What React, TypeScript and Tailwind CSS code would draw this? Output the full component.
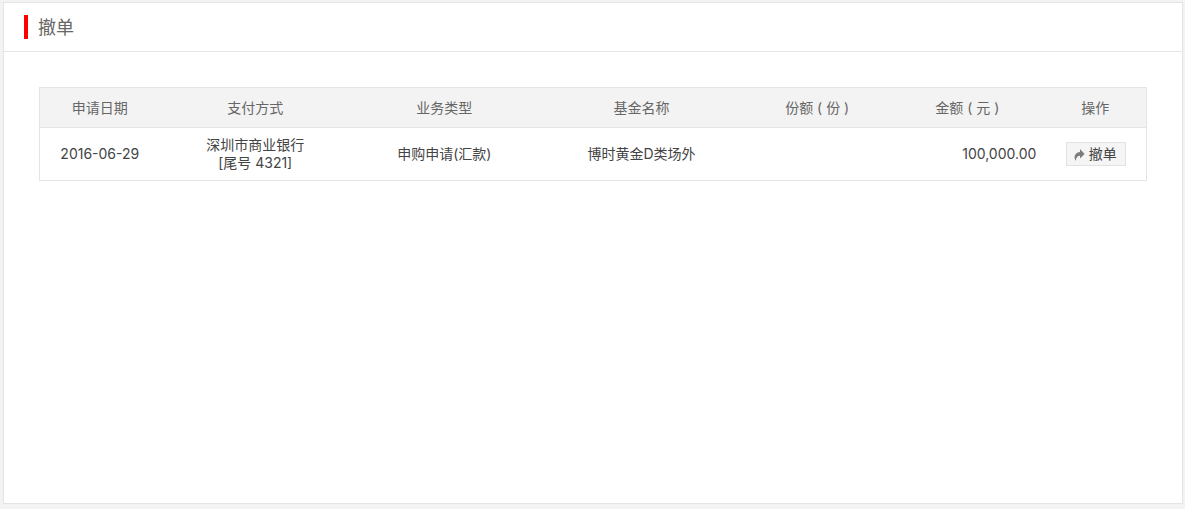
const FONT = "font-['Inter','Noto_Sans_CJK_SC',sans-serif]";

function ReplyIcon() {
  return (
    <svg width="11" height="12" viewBox="0 0 11 12" className="shrink-0 mt-[2px]">
      <path d="M1.6 12C-1 7.5 1.5 3.2 6 3V0L10.6 4.9 6 9.6V6.7C3.6 6.7 2.1 8.5 1.6 12Z" fill="#7d7d7d" />
    </svg>
  );
}

const headers = [
  { label: "申请日期", w: "w-[119px]", extra: "pl-[1px]" },
  { label: "支付方式", w: "w-[192px]", extra: "pl-[1px]" },
  { label: "业务类型", w: "w-[186px]", extra: "pl-[1px]" },
  { label: "基金名称", w: "w-[208px]", extra: "pl-[1px]" },
  { label: "份额 ( 份 )", w: "w-[146px]", extra: "pr-[2px]" },
  { label: "金额 ( 元 )", w: "w-[152px]", extra: "" },
  { label: "操作", w: "w-[103px]", extra: "pl-[1px]" },
];

export default function App() {
  return (
    <div className={`${FONT} h-[509px] w-[1185px] bg-[#f3f3f3] pl-[3px] pr-[2px] pt-[2px] pb-[5px]`}>
      <div className="h-full border border-[#e4e4e4] bg-white">
        <div className="flex h-[49px] items-center border-b border-[#e6e6e6] pl-[20px]">
          <span className="h-[24px] w-[4px] bg-[#ff0000]" />
          <h1 className="ml-[10px] pt-[2px] text-[18px] font-normal leading-[24px] text-[#666666]">撤单</h1>
        </div>
        <div className="px-[35px] pt-[35px]">
          <table className="w-[1108px] table-fixed border-collapse border border-[#e4e4e4] text-[14px] leading-[18px]">
            <thead>
              <tr className="h-[40px] border-b border-[#e4e4e4] bg-[#f3f3f3] text-[#666666]">
                {headers.map((h) => (
                  <th key={h.label} className={`${h.w} ${h.extra} p-0 text-center font-normal`}>{h.label}</th>
                ))}
              </tr>
            </thead>
            <tbody>
              <tr className="h-[53px] text-[#444444]">
                <td className="p-0 pl-[1px] text-center">2016-06-29</td>
                <td className="p-0 pl-[1px] text-center">
                  <div>深圳市商业银行</div>
                  <div>[尾号 4321]</div>
                </td>
                <td className="p-0 pl-[1px] text-center">申购申请(汇款)</td>
                <td className="p-0 pl-[1px] text-center">博时黄金D类场外</td>
                <td className="p-0" />
                <td className="p-0 pr-[7px] text-right">100,000.00</td>
                <td className="p-0 pl-[2px]">
                  <button className="mx-auto flex h-[24px] w-[60px] items-center justify-start gap-[4px] border border-[#e2e2e2] bg-[#f5f5f5] pb-[1px] pl-[7px] text-[14px] text-[#444444]">
                    <ReplyIcon />
                    <span>撤单</span>
                  </button>
                </td>
              </tr>
            </tbody>
          </table>
        </div>
      </div>
    </div>
  );
}
